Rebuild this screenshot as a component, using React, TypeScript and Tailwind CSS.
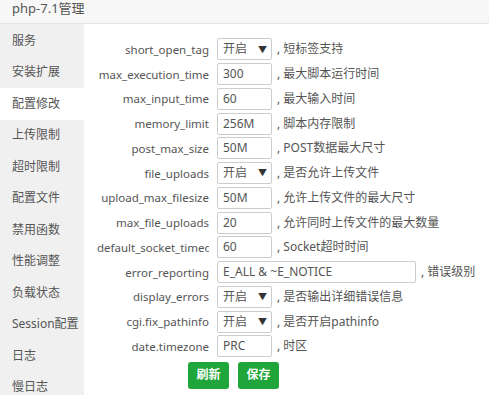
import React from "react";

type Row = {
  name: string;
  value: string;
  desc: string;
  select?: boolean;
  wide?: boolean;
};

const menu = [
  "服务",
  "安装扩展",
  "配置修改",
  "上传限制",
  "超时限制",
  "配置文件",
  "禁用函数",
  "性能调整",
  "负载状态",
  "Session配置",
  "日志",
  "慢日志",
];

const rows: Row[] = [
  { name: "short_open_tag", value: "开启", desc: ", 短标签支持", select: true },
  { name: "max_execution_time", value: "300", desc: ", 最大脚本运行时间" },
  { name: "max_input_time", value: "60", desc: ", 最大输入时间" },
  { name: "memory_limit", value: "256M", desc: ", 脚本内存限制" },
  { name: "post_max_size", value: "50M", desc: ", POST数据最大尺寸" },
  { name: "file_uploads", value: "开启", desc: ", 是否允许上传文件", select: true },
  { name: "upload_max_filesize", value: "50M", desc: ", 允许上传文件的最大尺寸" },
  { name: "max_file_uploads", value: "20", desc: ", 允许同时上传文件的最大数量" },
  { name: "default_socket_timeout", value: "60", desc: ", Socket超时时间" },
  { name: "error_reporting", value: "E_ALL & ~E_NOTICE", desc: ", 错误级别", wide: true },
  { name: "display_errors", value: "开启", desc: ", 是否输出详细错误信息", select: true },
  { name: "cgi.fix_pathinfo", value: "开启", desc: ", 是否开启pathinfo", select: true },
  { name: "date.timezone", value: "PRC", desc: ", 时区" },
];

const ConfigRow = ({ row }: { row: Row }) => (
  <div className="flex items-center h-[24.75px]">
    <div className="w-[112px] shrink-0 text-right overflow-hidden whitespace-nowrap text-[11.5px] text-[#555]">
      {row.name}
    </div>
    <div
      className={`ml-[8px] h-[22px] shrink-0 flex items-center justify-between border border-[#ccc] rounded-[2px] bg-white pl-[5px] pr-[4px] text-[#555] ${
        row.wide ? "w-[199px]" : "w-[55px]"
      }`}
    >
      <span>{row.value}</span>
      {row.select && <span className="text-[9px] text-[#333]">▼</span>}
    </div>
    <div className="ml-[5px] whitespace-nowrap text-[#555]">{row.desc}</div>
  </div>
);

export default function App() {
  return (
    <div className="w-[489px] h-[395px] overflow-hidden bg-white text-[12px] font-['Noto_Sans','Noto_Sans_CJK_SC',sans-serif] flex flex-col">
      <div className="h-[24px] shrink-0 bg-[#f7f7f7] border-b border-[#e4e4e4] pl-[12px] text-[13px] leading-[16px] text-[#555]">
        php-7.1管理
      </div>
      <div className="flex flex-1 min-h-0">
        <div className="w-[84px] shrink-0 bg-[#f0f0f0] pt-[1px]">
          {menu.map((m) => (
            <div
              key={m}
              className={`h-[31.5px] flex items-center pl-[12px] text-[12px] text-[#555] whitespace-nowrap ${
                m === "配置修改" ? "bg-white" : ""
              }`}
            >
              {m}
            </div>
          ))}
        </div>
        <div className="flex-1 pl-[13px] pt-[13px]">
          {rows.map((r) => (
            <ConfigRow key={r.name} row={r} />
          ))}
          <div className="flex gap-[9px] ml-[91px] mt-[3px]">
            <button className="w-[41px] h-[27px] rounded-[3px] bg-[#20a53a] text-white text-[12px] font-bold">
              刷新
            </button>
            <button className="w-[41px] h-[27px] rounded-[3px] bg-[#20a53a] text-white text-[12px] font-bold">
              保存
            </button>
          </div>
        </div>
      </div>
    </div>
  );
}
